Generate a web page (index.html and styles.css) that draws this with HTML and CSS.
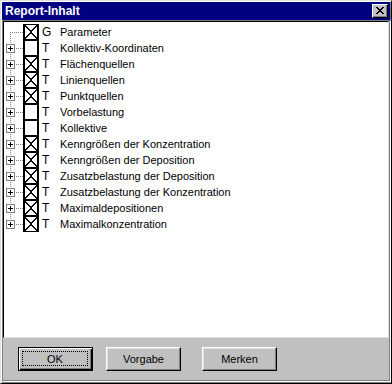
FILE: index.html
```html
<!DOCTYPE html>
<html lang="de">
<head>
    <meta charset="UTF-8">
    <title>Report-Inhalt</title>
    <link rel="stylesheet" href="styles.css">
</head>
<body>
    <div class="window">
        <div class="titlebar">
            <span class="title">Report-Inhalt</span>
            <span class="close">
                <svg width="8" height="7" viewBox="0 0 8 7"><path d="M0 0h2v1h1v1h2V1h1V0h2v1H7v1H6v1H5v1h1v1h1v1h1v1H6V6H5V5H3v1H2v1H0V6h1V5h1V4h1V3H2V2H1V1H0z" fill="#000"/></svg>
            </span>
        </div>

        <div class="client">
            <div class="tree">
                <div class="row first"><span class="twig"></span><span class="check on"></span><span class="kind">G</span><span class="label">Parameter</span></div>
                <div class="row"><span class="twig"><i class="exp"></i></span><span class="check"></span><span class="kind">T</span><span class="label">Kollektiv-Koordinaten</span></div>
                <div class="row"><span class="twig"><i class="exp"></i></span><span class="check on"></span><span class="kind">T</span><span class="label">Flächenquellen</span></div>
                <div class="row"><span class="twig"><i class="exp"></i></span><span class="check on"></span><span class="kind">T</span><span class="label">Linienquellen</span></div>
                <div class="row"><span class="twig"><i class="exp"></i></span><span class="check on"></span><span class="kind">T</span><span class="label">Punktquellen</span></div>
                <div class="row"><span class="twig"><i class="exp"></i></span><span class="check"></span><span class="kind">T</span><span class="label">Vorbelastung</span></div>
                <div class="row"><span class="twig"><i class="exp"></i></span><span class="check"></span><span class="kind">T</span><span class="label">Kollektive</span></div>
                <div class="row"><span class="twig"><i class="exp"></i></span><span class="check on"></span><span class="kind">T</span><span class="label">Kenngrößen der Konzentration</span></div>
                <div class="row"><span class="twig"><i class="exp"></i></span><span class="check on"></span><span class="kind">T</span><span class="label">Kenngrößen der Deposition</span></div>
                <div class="row"><span class="twig"><i class="exp"></i></span><span class="check on"></span><span class="kind">T</span><span class="label">Zusatzbelastung der Deposition</span></div>
                <div class="row"><span class="twig"><i class="exp"></i></span><span class="check on"></span><span class="kind">T</span><span class="label">Zusatzbelastung der Konzentration</span></div>
                <div class="row"><span class="twig"><i class="exp"></i></span><span class="check on"></span><span class="kind">T</span><span class="label">Maximaldepositionen</span></div>
                <div class="row last"><span class="twig"><i class="exp"></i></span><span class="check on"></span><span class="kind">T</span><span class="label">Maximalkonzentration</span></div>
            </div>

            <div class="buttons">
                <button class="btn default"><span>OK</span></button>
                <button class="btn vorgabe"><span>Vorgabe</span></button>
                <button class="btn merken"><span>Merken</span></button>
            </div>
        </div>
    </div>
</body>
</html>
```

FILE: styles.css
```css
html, body { margin: 0; padding: 0; }
body { background: #c0c0c0; font-family: "Liberation Sans", Arial, sans-serif; font-size: 11px; color: #000; }

.window {
    width: 392px; height: 384px; box-sizing: border-box; padding: 1px 1px 2px 1px;
    background: #c0c0c0;
    border-top: 1px solid #dfdfdf; border-left: 1px solid #dfdfdf;
    border-right: 1px solid #000; border-bottom: 1px solid #000;
    box-shadow: inset 1px 1px 0 #fff, inset -1px -1px 0 #808080;
    display: flex; flex-direction: column;
}

.titlebar {
    height: 18px; flex: none; background: #000080; color: #fff;
    display: flex; align-items: center; justify-content: space-between;
    padding: 0 2px 0 3px;
}
.title { font-weight: bold; font-size: 12px; }
.close {
    width: 16px; height: 14px; box-sizing: border-box; background: #c0c0c0;
    border-top: 1px solid #fff; border-left: 1px solid #fff;
    border-right: 1px solid #000; border-bottom: 1px solid #000;
    box-shadow: inset -1px -1px 0 #808080;
    display: flex; align-items: center; justify-content: center; padding: 0 1px 1px 0;
}
.close svg { display: block; }

/* etched frame round tree and buttons */
.client {
    flex: 1; display: flex; flex-direction: column;
    border: 1px solid #808080;
    box-shadow: 1px 1px 0 #fff;
}

.tree {
    height: 317px; flex: none; box-sizing: border-box; background: #fff;
    border-top: 1px solid #000; border-left: 1px solid #000;
    border-right: 1px solid #dfdfdf; border-bottom: 1px solid #dfdfdf;
    padding: 2px 0 0 0;
}

.row { display: flex; align-items: center; height: 16px; white-space: nowrap; }
.twig { position: relative; width: 19px; height: 16px; flex: none; }
.twig::before {
    content: ""; position: absolute; left: 6px; top: 8px; width: 13px; height: 1px;
    background: repeating-linear-gradient(to right, #808080 0 1px, transparent 1px 2px);
}
.twig::after {
    content: ""; position: absolute; left: 6px; top: 0; width: 1px; height: 16px;
    background: repeating-linear-gradient(to bottom, #808080 0 1px, transparent 1px 2px);
}
.first .twig::after { top: 8px; height: 8px; }
.last .twig::after { height: 8px; }

.exp {
    position: absolute; left: 2px; top: 4px; width: 9px; height: 9px; box-sizing: border-box;
    border: 1px solid #808080; background: #fff; z-index: 1;
}
.exp::before { content: ""; position: absolute; left: 1px; top: 3px; width: 5px; height: 1px; background: #000; }
.exp::after { content: ""; position: absolute; left: 3px; top: 1px; width: 1px; height: 5px; background: #000; }

.check {
    width: 16px; height: 16px; flex: none; box-sizing: border-box;
    background: #fff; border: solid #000; border-width: 1px 2px;
}
.check.on {
    background:
        linear-gradient(to top right, transparent calc(50% - 0.6px), #000 calc(50% - 0.6px), #000 calc(50% + 0.6px), transparent calc(50% + 0.6px)),
        linear-gradient(to bottom right, transparent calc(50% - 0.6px), #000 calc(50% - 0.6px), #000 calc(50% + 0.6px), transparent calc(50% + 0.6px)),
        #fff;
}
.kind { width: 13px; padding-left: 3px; flex: none; font-size: 12px; }
.label { padding-left: 5px; }

.buttons { display: flex; padding: 9px 0 0 15px; }
.btn {
    width: 75px; height: 24px; box-sizing: border-box; background: #c0c0c0;
    font-family: inherit; font-size: 11px; color: #000; padding: 0;
    border-top: 1px solid #fff; border-left: 1px solid #fff;
    border-right: 1px solid #000; border-bottom: 1px solid #000;
    box-shadow: inset -1px -1px 0 #808080, inset 1px 1px 0 #dfdfdf;
}
.btn.default {
    border: 1px solid #000;
    box-shadow: inset 1px 1px 0 #fff, inset -1px -1px 0 #000, inset -2px -2px 0 #808080;
    padding: 3px 4px 4px 3px;
}
.btn.default span {
    display: flex; align-items: center; justify-content: center; height: 100%;
    border: 1px dotted #000;
    box-sizing: border-box;
}
.vorgabe { margin-left: 13px; }
.merken { margin-left: 21px; }
```
